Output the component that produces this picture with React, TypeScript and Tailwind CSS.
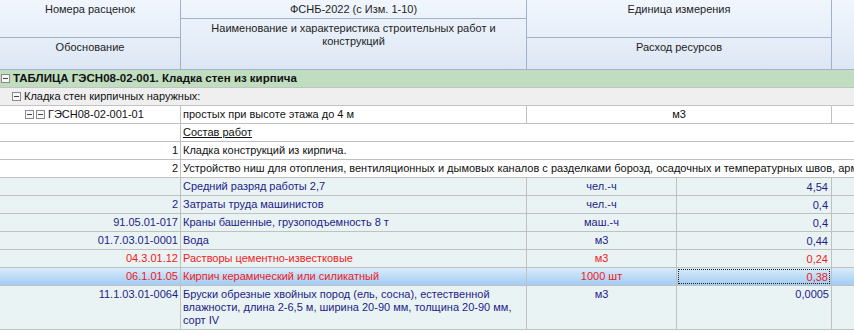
import React from "react";

const font = "font-['Liberation_Sans',Arial,sans-serif]";

const Toggle = () => (
  <span className="inline-flex h-[9px] w-[9px] shrink-0 items-center justify-center border border-[#8a8a8a] bg-[#f7f7f7]">
    <span className="h-px w-[5px] bg-[#444]" />
  </span>
);

type Res = {
  code: string;
  name: string;
  unit?: string;
  value?: string;
  red?: boolean;
  selected?: boolean;
};

const resources: Res[] = [
  { code: "", name: "Средний разряд работы 2,7", unit: "чел.-ч", value: "4,54" },
  { code: "2", name: "Затраты труда машинистов", unit: "чел.-ч", value: "0,4" },
  { code: "91.05.01-017", name: "Краны башенные, грузоподъемность 8 т", unit: "маш.-ч", value: "0,4" },
  { code: "01.7.03.01-0001", name: "Вода", unit: "м3", value: "0,44" },
  { code: "04.3.01.12", name: "Растворы цементно-известковые", unit: "м3", value: "0,24", red: true },
  { code: "06.1.01.05", name: "Кирпич керамический или силикатный", unit: "1000 шт", value: "0,38", red: true, selected: true },
];

const ResRow = ({ r }: { r: Res }) => {
  const color = r.red ? "text-[#f01a1a]" : "text-[#1c1c8a]";
  const bg = r.selected
    ? "bg-gradient-to-b from-[#d9ebfb] to-[#a2ccf2]"
    : "bg-[#eaf3f4]";
  return (
    <div className={`flex h-[18px] border-b border-[#c0c0c0] ${bg} ${color}`}>
      <div className="w-[181px] shrink-0 border-r border-[#c0c0c0] pr-[2px] text-right">{r.code}</div>
      <div className="w-[346px] shrink-0 border-r border-[#c0c0c0] pl-[2px]">{r.name}</div>
      <div className="w-[150px] shrink-0 border-r border-[#c0c0c0] text-center">{r.unit}</div>
      <div className="w-[155px] shrink-0 border-r border-[#c0c0c0] p-px">
        <div
          className={`h-full pr-px text-right leading-[15px] ${
            r.selected ? "border border-dotted border-[#222]" : "border border-transparent"
          }`}
        >
          {r.value}
        </div>
      </div>
      <div className="flex-1" />
    </div>
  );
};

export default function App() {
  return (
    <div className={`h-[333px] w-[854px] overflow-hidden bg-white text-[11px] leading-[17px] text-[#111] ${font}`}>
      {/* header */}
      <div className="flex h-[70px] border-b border-[#9fb2cb] bg-gradient-to-b from-[#f1f6fd] to-[#dde7f4] text-[#1e1e1e]">
        <div className="flex w-[181px] shrink-0 flex-col border-r border-[#9fb2cb]">
          <div className="h-[38px] border-b border-[#9fb2cb] pt-[1px] text-center">Номера расценок</div>
          <div className="flex-1 pt-[1px] text-center">Обоснование</div>
        </div>
        <div className="flex w-[346px] shrink-0 flex-col border-r border-[#9fb2cb]">
          <div className="h-[19px] border-b border-[#9fb2cb] pt-[1px] text-center">ФСНБ-2022 (с Изм. 1-10)</div>
          <div className="flex-1 px-6 pt-[3px] text-center leading-[13px]">
            Наименование и характеристика строительных работ и конструкций
          </div>
        </div>
        <div className="flex w-[305px] shrink-0 flex-col border-r border-[#9fb2cb]">
          <div className="h-[38px] border-b border-[#9fb2cb] pt-[1px] text-center">Единица измерения</div>
          <div className="flex-1 pt-[1px] text-center">Расход ресурсов</div>
        </div>
        <div className="flex-1" />
      </div>

      {/* table group */}
      <div className="flex h-[18px] items-center gap-[3px] border-b border-[#c3c3c3] bg-[#c0ddc0] pl-[1px] text-[11.5px] font-bold">
        <Toggle />
        <span>ТАБЛИЦА ГЭСН08-02-001. Кладка стен из кирпича</span>
      </div>
      <div className="flex h-[18px] items-center gap-[3px] border-b border-[#c3c3c3] bg-[#efefef] pl-[12px]">
        <Toggle />
        <span>Кладка стен кирпичных наружных:</span>
      </div>
      <div className="flex h-[18px] border-b border-[#c0c0c0]">
        <div className="flex w-[181px] shrink-0 items-center gap-[2px] border-r border-[#c0c0c0] pl-[25px]">
          <Toggle />
          <Toggle />
          <span className="ml-px">ГЭСН08-02-001-01</span>
        </div>
        <div className="w-[346px] shrink-0 border-r border-[#c0c0c0] pl-[2px]">простых при высоте этажа до 4 м</div>
        <div className="w-[305px] shrink-0 border-r border-[#c0c0c0] text-center">м3</div>
        <div className="flex-1" />
      </div>
      <div className="flex h-[18px] border-b border-[#c0c0c0]">
        <div className="w-[181px] shrink-0 border-r border-[#c0c0c0]" />
        <div className="flex-1 pl-[2px] underline">Состав работ</div>
      </div>
      <div className="flex h-[18px] border-b border-[#c0c0c0]">
        <div className="w-[181px] shrink-0 border-r border-[#c0c0c0] pr-[2px] text-right">1</div>
        <div className="flex-1 whitespace-nowrap pl-[2px]">Кладка конструкций из кирпича.</div>
      </div>
      <div className="flex h-[18px] overflow-hidden border-b border-[#c0c0c0]">
        <div className="w-[181px] shrink-0 border-r border-[#c0c0c0] pr-[2px] text-right">2</div>
        <div className="min-w-0 flex-1 overflow-hidden whitespace-nowrap pl-[2px]">
          Устройство ниш для отопления, вентиляционных и дымовых каналов с разделками борозд, осадочных и температурных швов, армирование кладки
        </div>
      </div>

      {resources.map((r, i) => (
        <ResRow key={i} r={r} />
      ))}

      <div className="flex h-[44px] border-b border-[#c0c0c0] bg-[#eaf3f4] text-[#1c1c8a]">
        <div className="w-[181px] shrink-0 border-r border-[#c0c0c0] pr-[2px] text-right">11.1.03.01-0064</div>
        <div className="w-[346px] shrink-0 border-r border-[#c0c0c0] pl-[2px] pr-3 pt-[2px] leading-[13px]">
          Бруски обрезные хвойных пород (ель, сосна), естественной влажности, длина 2-6,5 м, ширина 20-90 мм, толщина 20-90 мм, сорт IV
        </div>
        <div className="w-[150px] shrink-0 border-r border-[#c0c0c0] text-center">м3</div>
        <div className="w-[155px] shrink-0 border-r border-[#c0c0c0] pr-[2px] text-right">0,0005</div>
        <div className="flex-1" />
      </div>
    </div>
  );
}
